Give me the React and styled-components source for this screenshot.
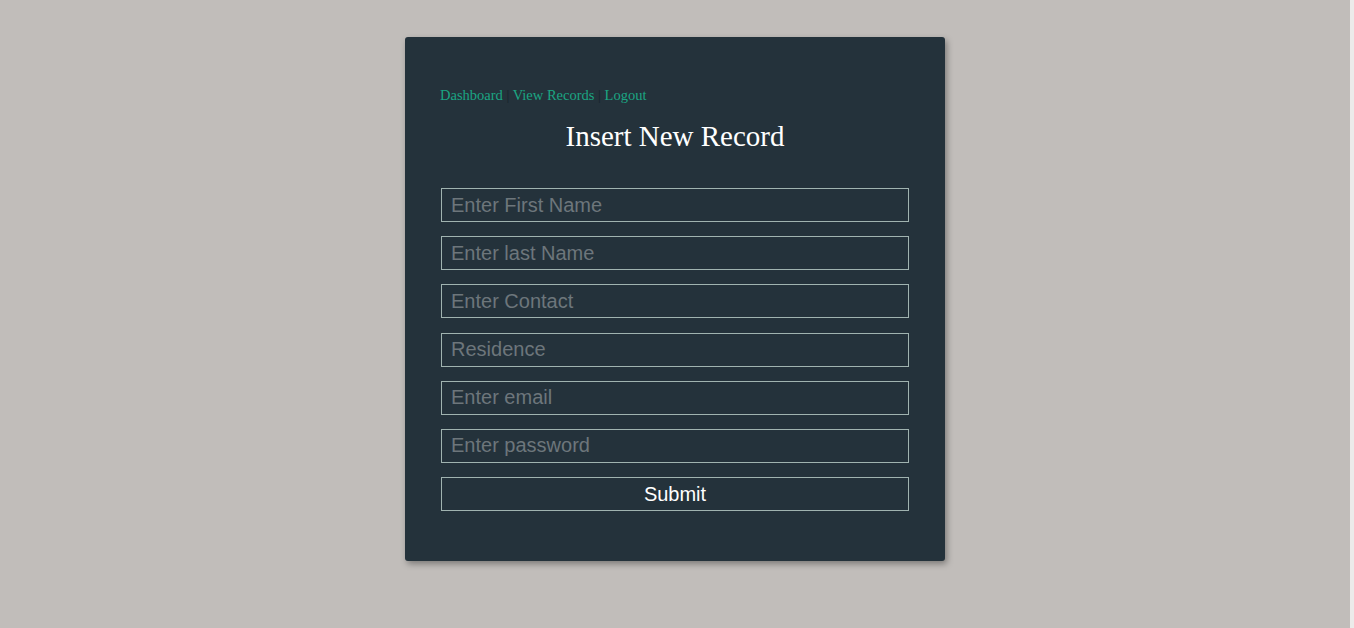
import React from 'react';
import styled, { createGlobalStyle } from 'styled-components';

const GlobalStyle = createGlobalStyle`
  html, body {
    margin: 0;
    padding: 0;
    background: #c1bdba;
  }
  body {
    font-family: "Liberation Serif", "Times New Roman", serif;
  }
  body::after {
    content: "";
    position: fixed;
    top: 0;
    right: 0;
    width: 4px;
    height: 100%;
    background: #ecebea;
  }
`;

const Page = styled.div`
  min-height: 628px;
  display: flex;
  justify-content: center;
  align-items: flex-start;
  padding: 37px 4px 0 0;
  box-sizing: border-box;
`;

const Card = styled.div`
  width: 540px;
  box-sizing: border-box;
  background: #24323b;
  border-radius: 3px;
  box-shadow: 2px 3px 6px rgba(0, 0, 0, 0.35);
  padding: 50px 36px 50px 36px;
`;

const Nav = styled.nav`
  margin-left: -1px;
  font-size: 14.5px;
  line-height: 16px;
  color: #16232b;
`;

const NavLink = styled.a`
  color: #1ba683;
  text-decoration: none;
  cursor: pointer;
`;

const Title = styled.h1`
  margin: 17px 0 36px;
  text-align: center;
  font-weight: normal;
  font-size: 29px;
  line-height: 32px;
  color: #ffffff;
`;

const Form = styled.form`
  display: flex;
  flex-direction: column;
  gap: 14.2px;
`;

const Input = styled.input`
  height: 34px;
  box-sizing: border-box;
  width: 100%;
  background: transparent;
  border: 1px solid #a0b3b0;
  border-radius: 0;
  padding: 0 9px;
  font-family: "Liberation Sans", Arial, sans-serif;
  font-size: 20px;
  color: #ffffff;
  outline: none;

  &::placeholder {
    color: #6d767b;
  }
`;

const Button = styled.button`
  height: 34px;
  width: 100%;
  background: transparent;
  border: 1px solid #a0b3b0;
  border-radius: 0;
  font-family: "Liberation Sans", Arial, sans-serif;
  font-size: 20px;
  color: #ffffff;
  cursor: pointer;
`;

const fields = [
  'Enter First Name',
  'Enter last Name',
  'Enter Contact',
  'Residence',
  'Enter email',
  'Enter password',
];

export default function App() {
  return (
    <>
      <GlobalStyle />
      <Page>
        <Card>
          <Nav>
            <NavLink>Dashboard</NavLink> | <NavLink>View Records</NavLink> | <NavLink>Logout</NavLink>
          </Nav>
          <Title>Insert New Record</Title>
          <Form onSubmit={(e) => e.preventDefault()}>
            {fields.map((f) => (
              <Input key={f} type={f === 'Enter password' ? 'password' : 'text'} placeholder={f} />
            ))}
            <Button type="submit">Submit</Button>
          </Form>
        </Card>
      </Page>
    </>
  );
}
